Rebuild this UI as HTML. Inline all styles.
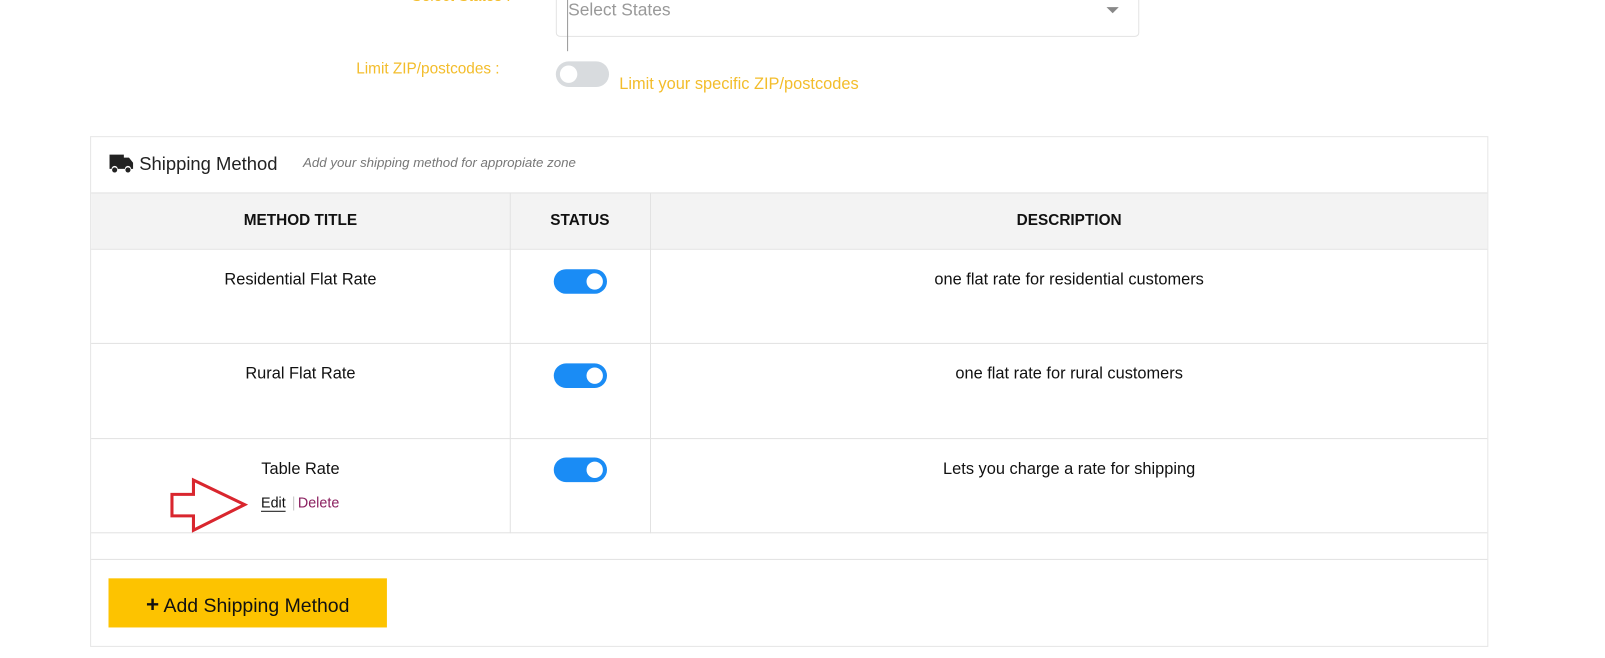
<!DOCTYPE html>
<html><head><style>
body{margin:0;width:1605px;height:658px;background:#fff;font-family:"Liberation Sans",sans-serif;position:relative;overflow:hidden}
#w{position:absolute;left:0;top:0;width:1568px;height:643px;transform:scale(1.0236);transform-origin:0 0}
.a{position:absolute}
.lbl{color:#f3bd2b;font-size:15px}
.tog{position:absolute;width:52px;height:24px;border-radius:12px;background:#1a8cf5}
.tog::after{content:"";position:absolute;right:4px;top:4px;width:16px;height:16px;border-radius:50%;background:#fff}
.cell{position:absolute;font-size:16px;color:#111;text-align:center}
.hl{position:absolute;background:#e2e2e2}
</style></head><body><div id="w">
<div class="a lbl" style="left:402px;top:-12px">Select States :</div>
<div class="a" style="left:543px;top:-6px;width:568px;height:40px;border:1px solid #e3e3e3;border-radius:4px"></div>
<div class="a" style="left:554px;top:0;width:1px;height:50px;background:#999"></div>
<div class="a" style="left:555px;top:0;font-size:17px;color:#999">Select States</div>
<div class="a" style="left:1081px;top:7px;width:0;height:0;border-left:6px solid transparent;border-right:6px solid transparent;border-top:6px solid #888"></div>
<div class="a lbl" style="left:348px;top:59px;font-size:15px">Limit ZIP/postcodes :</div>
<div class="a" style="left:543px;top:60px;width:52px;height:25px;border-radius:13px;background:#d8dbde"></div>
<div class="a" style="left:547px;top:64px;width:17px;height:17px;border-radius:50%;background:#fff"></div>
<div class="a lbl" style="left:605px;top:74px;font-size:16px">Limit your specific ZIP/postcodes</div>

<div class="a" style="left:88px;top:133px;width:1366px;height:499px;border:1px solid #e6e6e6;box-sizing:border-box"></div>
<svg class="a" style="left:106px;top:150px" width="25" height="20" viewBox="0 0 25 20"><path d="M1 1h14v3h5l4 5v6h-2a3 3 0 0 0-6 0H9a3 3 0 0 0-6 0H1z" fill="#222"/><circle cx="6" cy="16" r="2.5" fill="#222"/><circle cx="19" cy="16" r="2.5" fill="#222"/></svg>
<div class="a" style="left:136px;top:150px;font-size:18px;color:#222">Shipping Method</div>
<div class="a" style="left:296px;top:151px;font-size:13px;color:#777;font-style:italic">Add your shipping method for appropiate zone</div>

<div class="a" style="left:89px;top:188px;width:1364px;height:55px;background:#f3f3f3"></div>
<div class="hl" style="left:89px;top:188px;width:1364px;height:1px"></div>
<div class="hl" style="left:89px;top:243px;width:1364px;height:1px"></div>
<div class="hl" style="left:89px;top:335px;width:1364px;height:1px"></div>
<div class="hl" style="left:89px;top:428px;width:1364px;height:1px"></div>
<div class="hl" style="left:89px;top:520px;width:1364px;height:1px"></div>
<div class="hl" style="left:89px;top:546px;width:1364px;height:1px"></div>
<div class="hl" style="left:498px;top:188px;width:1px;height:333px"></div>
<div class="hl" style="left:635px;top:188px;width:1px;height:333px"></div>

<div class="cell" style="left:89px;width:409px;top:207px;font-size:15px;font-weight:bold">METHOD TITLE</div>
<div class="cell" style="left:498px;width:137px;top:207px;font-size:15px;font-weight:bold">STATUS</div>
<div class="cell" style="left:635px;width:819px;top:207px;font-size:15px;font-weight:bold">DESCRIPTION</div>

<div class="cell" style="left:89px;width:409px;top:265px">Residential Flat Rate</div>
<div class="tog" style="left:541px;top:263px"></div>
<div class="cell" style="left:635px;width:819px;top:265px">one flat rate for residential customers</div>
<div class="cell" style="left:89px;width:409px;top:357px">Rural Flat Rate</div>
<div class="tog" style="left:541px;top:355px"></div>
<div class="cell" style="left:635px;width:819px;top:357px">one flat rate for rural customers</div>
<div class="cell" style="left:89px;width:409px;top:450px">Table Rate</div>
<div class="tog" style="left:541px;top:447px"></div>
<div class="cell" style="left:635px;width:819px;top:450px">Lets you charge a rate for shipping</div>
<div class="a" style="left:255px;top:483px;font-size:14px;color:#111;border-bottom:1px solid #111;line-height:16px">Edit</div>
<div class="a" style="left:285px;top:483px;font-size:14px;color:#ccc">|</div>
<div class="a" style="left:291px;top:483px;font-size:14px;color:#8b2060">Delete</div>
<svg class="a" style="left:165px;top:466px" width="80" height="56"><path d="M3 17H24V3L74 27L24 52V38H3Z" fill="none" stroke="#d9262e" stroke-width="3"/></svg>

<div class="a" style="left:106px;top:565px;width:272px;height:48px;background:#fdc300"></div>
<div class="a" style="left:106px;top:578px;width:272px;text-align:center;font-size:19px;color:#111"><b style="font-size:22px">+</b> Add Shipping Method</div>
</div></body></html>
